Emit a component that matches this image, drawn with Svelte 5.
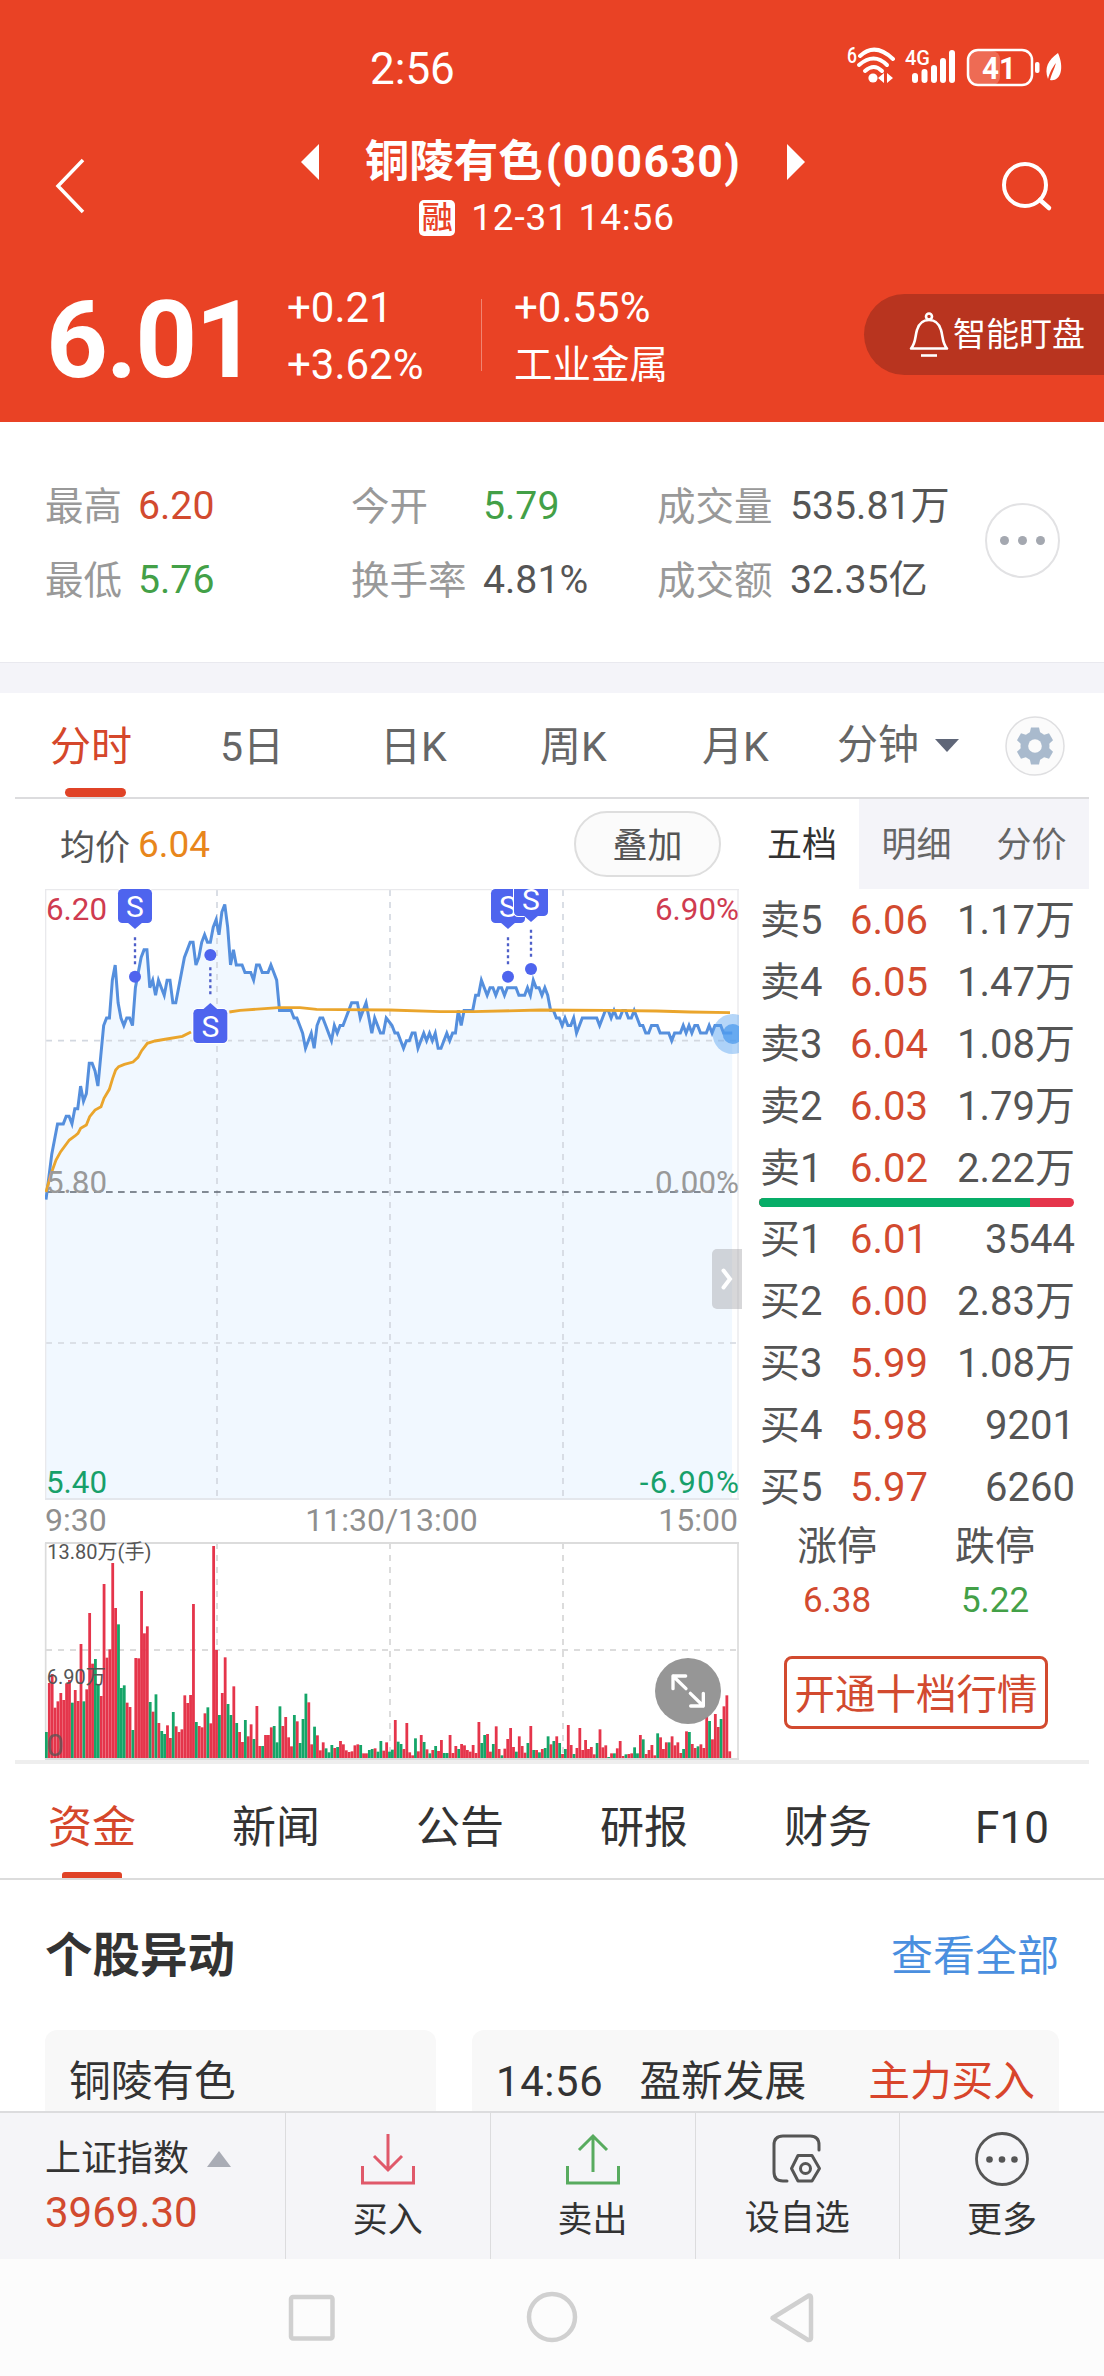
<script lang="ts">
  const stats = [
    { label: '最高', value: '6.20', tone: 'up' },
    { label: '今开', value: '5.79', tone: 'down' },
    { label: '成交量', value: '535.81万', tone: '' },
    { label: '最低', value: '5.76', tone: 'down' },
    { label: '换手率', value: '4.81%', tone: '' },
    { label: '成交额', value: '32.35亿', tone: '' }
  ];

  const periods = ['分时', '5日', '日K', '周K', '月K'];
  const infoTabs = ['资金', '新闻', '公告', '研报', '财务', 'F10'];

  const asks = [
    ['卖5', '6.06', '1.17万'],
    ['卖4', '6.05', '1.47万'],
    ['卖3', '6.04', '1.08万'],
    ['卖2', '6.03', '1.79万'],
    ['卖1', '6.02', '2.22万']
  ];
  const bids = [
    ['买1', '6.01', '3544'],
    ['买2', '6.00', '2.83万'],
    ['买3', '5.99', '1.08万'],
    ['买4', '5.98', '9201'],
    ['买5', '5.97', '6260']
  ];
  const askShare = 86;

  // Price per minute, in cents above the previous close (5.80)
  const cents = [
    -1, 2, 5, 7, 9, 9, 9, 10, 10, 9, 11, 11, 14, 12, 13, 17, 17, 16, 14, 18,
    22, 23, 23, 28, 30, 25, 23, 22, 23, 23, 22, 27, 29, 31, 32, 32, 27, 28, 26, 28,
    27, 26, 28, 28, 25, 25, 27, 29, 31, 32, 33, 33, 30, 31, 33, 34, 33, 33, 35, 36,
    34, 37, 38, 35, 30, 32, 30, 30, 30, 29, 29, 29, 28, 30, 30, 29, 29, 29, 30, 29,
    28, 24, 24, 24, 24, 24, 23, 23, 22, 21, 19, 20, 21, 19, 22, 23, 23, 22, 21, 20,
    22, 21, 22, 22, 23, 24, 25, 25, 25, 23, 24, 25, 23, 21, 23, 22, 21, 21, 23, 22.5,
    22, 21, 21, 20, 19, 20, 20, 21, 21, 19, 20, 21, 20, 21, 20, 21, 19, 19, 20, 21,
    20, 21, 21, 24, 22, 24, 24, 24, 24, 26, 26, 28, 27, 26, 27, 27, 26, 27, 27, 26,
    27, 27, 27, 27, 26, 26, 26, 27, 26, 28, 27, 27, 26, 27, 26, 24, 24, 23, 23, 22,
    23, 22, 22, 23, 21, 22, 23, 23, 23, 23, 23, 23, 22, 23, 24, 24, 23, 24, 23, 23,
    24, 24, 23, 23, 24, 23, 22, 22, 21, 21, 22, 22, 22, 21, 21, 21, 21, 20, 21, 21,
    21, 22, 21, 22, 21, 22, 22, 21, 21, 21, 22, 21, 22, 22, 22, 21, 21, 21, 21
  ];

  // Volume per minute, negative when the minute closed lower
  const volumes = [
    -78, 225, 252, 151, 170, 195, 174, 224, 234, -166, 204, 171, 342, -170, 206, 435, 283, -297, -219, 186,
    522, 301, 326, 585, 450, -401, -210, -218, 166, 153, -84, 300, 299, 501, 374, 395, -168, 139, -191, 105,
    -81, -72, 98, 60, -138, 95, 78, 86, 188, 165, 189, 462, -108, 96, 92, 134, -152, 104, 636, 324,
    -129, 195, 302, -162, -129, 215, -105, 78, 48, -114, 65, 101, -57, 156, 36, -36, 69, 69, 92, -96,
    -47, -155, 96, 123, 62, 35, -129, 110, -45, -117, -193, 167, 41, -94, 68, 23, 47, -29, -17, -39,
    30, -33, 51, 41, 23, 18, 20, 38, 41, -39, 14, 14, -24, -27, 29, -19, -51, 22, 47, -19,
    -25, 114, -49, -42, 27, 105, 17, 8, -59, 20, 69, -48, 26, -14, 24, -36, 21, 54, -15, -15,
    69, 15, 36, -27, 42, 38, 24, 19, 39, 15, 108, -45, -69, 72, 19, -42, 95, 27, -8, 28,
    57, 90, 33, -19, 65, 36, 16, -45, 96, -24, 24, -17, 27, -30, -65, 41, -51, 65, -45, 12,
    -27, 99, 39, -12, 30, 90, 24, 54, 27, 33, 11, -45, 86, 32, 38, -3, 14, -14, 29, 51,
    6, -11, 12, 14, -32, -14, 69, -56, 12, 24, 39, 8, -74, 62, 27, 47, -47, 65, 38, 47,
    15, -27, 80, -78, 42, 30, -35, 41, 30, 123, -111, 56, 132, 93, -117, 155, 188, 20
  ];

  // Chart units: three per pixel
  const step = 8.65;
  const pricePoints = cents
    .map((c, i) => `${(3 + i * step).toFixed(1)},${(909 - c * 22.7).toFixed(1)}`)
    .join(' ');
  const avgPoints =
    '3,909 18,855 33,813 47,788 73,753 90,741 99,733 107,718 124,708 134,683 150,663 168,653 177,628 193,601 203,568 212,543 221,533 238,526 264,519 279,505 290,485 307,463 330,456 365,450 412,442 438,429';
  const avgPointsAfter =
    '553,369 585,364 700,356 765,356 815,361 885,362 1035,363 1185,368 1285,368 1485,363 1685,364 1835,366 1935,369 2055,371';
  const gridX = [516, 1035, 1554];

  // y is the centre of the badge, tip points towards the trade dot
  const trades = [
    { x: 270, dot: 263, y: 51 },
    { x: 496, dot: 198, y: 411 },
    { x: 1389, dot: 263, y: 51 },
    { x: 1458, dot: 240, y: 30 }
  ];

  const teeth = [0, 60, 120, 180, 240, 300];
</script>

<div class="screen">
  <header>
    <div class="status">
      <span class="clock">2:56</span>
      <svg class="status-icons" width="220" height="44" viewBox="0 0 220 44">
        <text x="0" y="20" font-size="22" font-weight="500" textLength="10" lengthAdjust="spacingAndGlyphs">6</text>
        <g fill="none" stroke="#fff" stroke-width="4" stroke-linecap="round">
          <path d="M13 13Q28 -1 46 16" />
          <path d="M12 22Q27 9 40 22" />
          <path d="M18 28Q27 20 35 28" />
        </g>
        <circle cx="26" cy="35" r="4.6" />
        <path d="M37 30v10l-6-5zM40 30v10l6-5z" />
        <text x="58" y="22" font-size="21" font-weight="500" textLength="25" lengthAdjust="spacingAndGlyphs">4G</text>
        <g stroke="#fff" stroke-width="6" stroke-linecap="round">
          <path d="M68 37v-4M77.500 37v-8M87 37v-12M96 37v-19M105 37v-27" />
        </g>
        <rect x="122" y="8" width="31" height="34" rx="8" opacity=".22" />
        <rect x="121" y="7" width="64" height="35" rx="10" fill="none" stroke="#fff" stroke-width="2.500" />
        <text x="135" y="35.500" font-size="32" font-weight="700" textLength="34" lengthAdjust="spacingAndGlyphs">41</text>
        <rect x="188" y="19" width="4.500" height="11" rx="2" />
        <path d="M211 10C201 17 197 25 201 36C203 29 205 25 209 20C207 27 204 32 203 37C213 39 218 26 211 10Z" />
      </svg>
    </div>

    <div class="nav">
      <svg width="32" height="58" viewBox="0 0 32 58" class="back">
        <path d="M29 3L4 29L29 55" fill="none" stroke="#fff" stroke-width="3.500" />
      </svg>
      <div class="name">
        <div class="title">
          <svg width="18" height="38" viewBox="0 0 18 38"><path d="M18 1V37L0 19Z" /></svg>
          <h1>铜陵有色<span>(000630)</span></h1>
          <svg width="18" height="38" viewBox="0 0 18 38"><path d="M0 1V37L18 19Z" /></svg>
        </div>
        <div class="time"><b>融</b>12-31 14:56</div>
      </div>
      <svg width="54" height="54" viewBox="0 0 54 54" class="search">
        <circle cx="25" cy="25" r="21" fill="none" stroke="#fff" stroke-width="4" />
        <path d="M40 40L49 48" stroke="#fff" stroke-width="4.500" stroke-linecap="round" />
      </svg>
    </div>

    <div class="quote">
      <strong>6.01</strong>
      <div class="pair change"><span>+0.21</span><span>+3.62%</span></div>
      <div class="pair sector"><span>+0.55%</span><span>工业金属</span></div>
      <div class="watch">
        <svg width="40" height="46" viewBox="0 0 40 46">
          <g fill="none" stroke="#fff" stroke-width="2.600">
            <circle cx="20" cy="4.500" r="3" />
            <path d="M2 36.500C7 31 6 24 8 18C10 11 14 8 20 8C26 8 30 11 32 18C34 24 33 31 38 36.500Z" stroke-linejoin="round" />
            <path d="M12 43.500H28" />
          </g>
        </svg>
        智能盯盘
      </div>
    </div>
  </header>

  <section class="stats">
    <div class="stat-grid">
      {#each stats as s}
        <span class="label">{s.label}</span>
        <span class="value {s.tone}">{s.value}</span>
      {/each}
    </div>
    <div class="more"><i></i><i></i><i></i></div>
  </section>

  <div class="band"></div>

  <nav class="periods">
    {#each periods as p, i}
      <span class:active={i === 0}>{p}</span>
    {/each}
    <span class="minutes">
      分钟
      <svg width="24" height="13" viewBox="0 0 24 13"><path d="M0 0H24L12 13Z" fill="#5f6678" /></svg>
    </span>
    <svg class="gear" width="60" height="60" viewBox="-30 -30 60 60">
      <circle r="29" fill="#fbfbfb" stroke="#dfdfe1" stroke-width="1.500" />
      <g fill="#a9bacd">
        <circle r="14.500" />
        {#each teeth as t}
          <path d="M-5.500 -12L-4 -18.500H4L5.500 -12Z" transform="rotate({t})" />
        {/each}
      </g>
      <circle r="6.800" fill="#fbfbfb" />
    </svg>
  </nav>

  <main>
    <div class="charts">
      <div class="chart-head">
        <span>均价</span><em>6.04</em>
        <button>叠加</button>
      </div>

      <div class="chart">
        <svg width="694" height="611" viewBox="0 0 2082 1833">
          <polygon points="3,1830 {pricePoints} 2061,1830" fill="#f1f8ff" />
          <g stroke="#d3d8e0" stroke-width="5" stroke-dasharray="18 18">
            {#each gridX as x}
              <path d="M{x} 3V1830" />
            {/each}
            <path d="M3 455H2073M3 1362H2073" />
          </g>
          <path d="M3 909H2064" stroke="#5e6672" stroke-width="5" stroke-dasharray="20 16" />
          <path d="M0 1.500H2082M2 0V1833M2079 0V1833" stroke="#e9e9ec" stroke-width="4" fill="none" />
          <path d="M0 1830H2082" stroke="#e4e7ec" stroke-width="6" />
          <polyline points={pricePoints} fill="none" stroke="#558fdd" stroke-width="9" />
          <polyline points={avgPoints} fill="none" stroke="#eaa52c" stroke-width="8.500" />
          <polyline points={avgPointsAfter} fill="none" stroke="#eaa52c" stroke-width="8.500" />

          <g class="axis">
            <text x="3" y="93" fill="#cf3b50">6.20</text>
            <text x="2082" y="93" fill="#cf3b50" text-anchor="end">6.90%</text>
            <text x="3" y="911" fill="#999">5.80</text>
            <text x="2082" y="911" fill="#999" text-anchor="end">0.00%</text>
            <text x="3" y="1812" fill="#17a06a">5.40</text>
            <text x="2082" y="1812" fill="#17a06a" text-anchor="end" textLength="298">-6.90%</text>
          </g>

          {#each trades as t}
            {@const dir = t.y < t.dot ? 1 : -1}
            <g fill="#4e64ee">
              <path
                d="M{t.x} {t.dot - dir * 118}V{t.dot - dir * 36}"
                stroke="#4e5fc9"
                stroke-width="7"
                stroke-dasharray="9 9"
              />
              <circle cx={t.x} cy={t.dot} r="18" />
              <rect x={t.x - 51} y={t.y - 51} width="102" height="102" rx="13" class="badge" />
              <path d="M{t.x - 24} {t.y + dir * 48}H{t.x + 24}L{t.x} {t.y + dir * 69}Z" />
              <text x={t.x} y={t.y + 32} class="badge-text">S</text>
            </g>
          {/each}

          <circle cx="2063" cy="435" r="60" fill="#5ba3f0" opacity=".45" />
          <circle cx="2063" cy="435" r="30" fill="#4d9bee" opacity=".75" />
        </svg>
        <div class="fold">
          <svg width="12" height="22" viewBox="0 0 12 22">
            <path d="M2.500 2.500L9 11L2.500 19.500" fill="none" stroke="#fff" stroke-width="4" stroke-linecap="round" />
          </svg>
        </div>
      </div>

      <div class="hours"><span>9:30</span><span>11:30/13:00</span><span>15:00</span></div>

      <svg class="volume" width="694" height="218" viewBox="0 0 2082 654">
        <g stroke="#dcdcdc" stroke-width="6" stroke-dasharray="18 18">
          {#each gridX as x}
            <path d="M{x} 3V648" />
          {/each}
          <path d="M3 324H2073" />
        </g>
        <path d="M0 3H2082M0 651H2082" stroke="#dcdcdc" stroke-width="6" />
        <path d="M2 3V651M2079 3V651" stroke="#dcdcdc" stroke-width="5" />
        {#each volumes as v, i}
          <rect
            x={i * step}
            y={648 - Math.abs(v)}
            width="8.4"
            height={Math.abs(v)}
            fill={v < 0 ? '#15a568' : '#e5354b'}
          />
        {/each}
        <g fill="#555" font-size="60">
          <text x="7" y="52">13.80万(手)</text>
          <text x="5" y="427">6.90万</text>
          <text x="4" y="642" font-size="94" opacity=".75">0</text>
        </g>
        <circle cx="1929" cy="447" r="99" fill="#8e8e8e" opacity=".93" />
        <g fill="none" stroke="#fff" stroke-width="10" stroke-linecap="round" stroke-linejoin="round">
          <path d="M1923 440L1884 402M1884 440V402H1922" />
          <path d="M1936 454L1975 492M1975 454V492H1937" />
        </g>
      </svg>
    </div>

    <aside>
      <div class="book-tabs"><span class="on">五档</span><span>明细</span><span>分价</span></div>
      <div class="book">
        {#each asks as [name, price, amount]}
          <div class="row"><span>{name}</span><span class="up">{price}</span><span>{amount}</span></div>
        {/each}
        <div class="ratio"><i style="width: {askShare}%"></i></div>
        {#each bids as [name, price, amount]}
          <div class="row"><span>{name}</span><span class="up">{price}</span><span>{amount}</span></div>
        {/each}
      </div>
      <div class="limits">
        <div>涨停<span class="up">6.38</span></div>
        <div>跌停<span class="down">5.22</span></div>
      </div>
      <button class="level2">开通十档行情</button>
    </aside>
  </main>

  <nav class="info-tabs">
    {#each infoTabs as t, i}
      <span class:active={i === 0}>{t}</span>
    {/each}
  </nav>

  <section class="moves">
    <div class="moves-head">
      <h2>个股异动</h2>
      <a href="#all">查看全部</a>
    </div>
    <div class="cards">
      <div class="card own">铜陵有色</div>
      <div class="card"><span class="at">14:56</span><span>盈新发展</span><span class="hot">主力买入</span></div>
    </div>
  </section>

  <footer>
    <div class="index">
      <span>上证指数 <svg width="24" height="16" viewBox="0 0 24 16"><path d="M12 0L24 16H0Z" fill="#a9acb5" /></svg></span>
      <strong>3969.30</strong>
    </div>
    <div class="action">
      <svg width="56" height="56" viewBox="0 0 56 56" fill="none" stroke="#e0596a" stroke-width="3">
        <path d="M28 3V39M14 25L28 39L42 25" />
        <path d="M2.500 35V52H53.500V35" />
      </svg>
      买入
    </div>
    <div class="action">
      <svg width="56" height="56" viewBox="0 0 56 56" fill="none" stroke="#58ab5f" stroke-width="3">
        <path d="M28 41V5M14 19L28 5L42 19" />
        <path d="M2.500 35V52H53.500V35" />
      </svg>
      卖出
    </div>
    <div class="action pick">
      <svg width="56" height="56" viewBox="0 0 56 56" fill="none" stroke="#555" stroke-width="3" stroke-linecap="round" stroke-linejoin="round">
        <path d="M18 50H14Q5 50 5 41V14Q5 5 14 5H41Q50 5 50 14V19" />
        <path d="M29 24.500H43L50.500 37.500L43 50H29L22.500 37.500Z" />
        <circle cx="36.500" cy="37.500" r="5" />
      </svg>
      设自选
    </div>
    <div class="action">
      <svg width="56" height="56" viewBox="0 0 56 56">
        <circle cx="28" cy="28" r="25.500" fill="none" stroke="#555" stroke-width="2.800" />
        <g fill="#555"><circle cx="15.500" cy="28.500" r="3.300" /><circle cx="28" cy="28.500" r="3.300" /><circle cx="40.500" cy="28.500" r="3.300" /></g>
      </svg>
      更多
    </div>
  </footer>

  <div class="system-nav">
    <svg width="1104" height="117" viewBox="0 0 1104 117" fill="none" stroke="#d0d0d0" stroke-width="4.500" stroke-linejoin="round">
      <rect x="291" y="38" width="41.500" height="41.500" rx="2" />
      <circle cx="552" cy="58" r="23" />
      <path d="M772.500 59L809 36.500Q811 36.500 811 39V79Q811 81.500 808 81Z" />
    </svg>
  </div>
</div>

<style>
  :global(body) {
    background: #fff;
  }

  .screen {
    width: 1104px;
    height: 2376px;
    overflow: hidden;
    display: flex;
    flex-direction: column;
    color: #555;
    font-family: Roboto, 'Noto Sans CJK SC', sans-serif;
  }

  .screen * {
    box-sizing: border-box;
    font-family: inherit;
  }

  .screen > * {
    flex: none;
  }

  svg {
    display: block;
    flex: none;
  }

  h1,
  h2 {
    margin: 0;
  }

  .up {
    color: #d24a2f;
  }

  .down {
    color: #43a047;
  }

  /* Header */
  header {
    height: 422px;
    background: #e94225;
    color: #fff;
  }

  header svg {
    fill: #fff;
  }

  .status {
    display: flex;
    justify-content: space-between;
    height: 136px;
    padding: 43px 37px 0 370px;
  }

  .clock {
    font-size: 44px;
    line-height: 52px;
  }

  .nav {
    display: flex;
    justify-content: space-between;
    height: 136px;
    padding: 0 50px 0 54px;
  }

  .back {
    margin-top: 21px;
  }

  .search {
    margin-top: 24px;
  }

  .name {
    display: flex;
    flex-direction: column;
    align-items: center;
    margin-left: 20px;
  }

  .title {
    display: flex;
    align-items: center;
    gap: 46px;
    height: 52px;
  }

  h1 {
    font-size: 44.5px;
    line-height: 54px;
  }

  h1 span {
    margin-left: 3px;
    letter-spacing: 1.4px;
  }

  .time {
    display: flex;
    align-items: center;
    gap: 16px;
    height: 40px;
    margin: 10px 0 0 -12px;
    font-size: 37px;
    line-height: 44px;
    letter-spacing: 0.8px;
  }

  .time b {
    width: 36px;
    height: 36px;
    border-radius: 5px;
    background: #fff;
    color: #e94225;
    font-size: 31px;
    font-weight: 500;
    line-height: 36px;
    text-align: center;
    letter-spacing: 0;
  }

  .quote {
    display: flex;
    height: 150px;
    padding: 8px 0 0 46px;
  }

  .quote strong {
    width: 241px;
    padding-top: 15px;
    font-size: 108px;
    line-height: 90px;
    letter-spacing: -2px;
  }

  .pair {
    display: flex;
    flex-direction: column;
    font-size: 42px;
    line-height: 56.5px;
  }

  .change {
    position: relative;
    width: 195px;
  }

  .change::after {
    content: '';
    position: absolute;
    top: 19px;
    left: 194px;
    width: 1px;
    height: 72px;
    background: rgba(255, 255, 255, 0.35);
  }

  .sector {
    padding-left: 32px;
  }

  .sector span:last-child {
    font-size: 38.5px;
  }

  .watch {
    display: flex;
    align-items: center;
    gap: 4px;
    width: 240px;
    height: 81px;
    margin: 14px 0 0 auto;
    padding-left: 45px;
    border-radius: 41px 0 0 41px;
    background: #b8341f;
    font-size: 33px;
    line-height: 78px;
    white-space: nowrap;
  }

  /* Day summary */
  .stats {
    display: flex;
    height: 240px;
    padding: 47px 44px 0 45px;
  }

  .stat-grid {
    display: grid;
    grid-template-columns: 93px 213px 132px 174px 133px 190px;
    grid-auto-rows: 74px;
    line-height: 75px;
    white-space: nowrap;
  }

  .label {
    color: #999;
    font-size: 38.5px;
  }

  .value {
    font-size: 39.2px;
  }

  .more {
    display: flex;
    align-items: center;
    justify-content: center;
    gap: 9px;
    width: 75px;
    height: 75px;
    margin: 34px 0 0 5px;
    border: 2px solid #e2e2e4;
    border-radius: 50%;
  }

  .more i {
    width: 9px;
    height: 9px;
    border-radius: 50%;
    background: #a4a8b0;
  }

  .band {
    height: 31px;
    border-top: 1px solid #e9e9ef;
    background: #f4f4f9;
  }

  /* Period tabs */
  .periods {
    display: grid;
    grid-template-columns: 170px 160px 160px 162px 135px 168px 60px;
    grid-template-rows: 104px;
    height: 106px;
    margin: 0 15px;
    padding-left: 35px;
    border-bottom: 2px solid #dcdcde;
    color: #666;
    font-size: 41px;
    line-height: 108px;
    white-space: nowrap;
  }

  .active {
    position: relative;
    color: #d5472b;
  }

  .active::after {
    content: '';
    position: absolute;
    bottom: 0;
    left: 15px;
    width: 61px;
    height: 9px;
    border-radius: 5px;
    background: #e04327;
  }

  .minutes {
    display: flex;
    align-items: center;
    gap: 16px;
  }

  .gear {
    margin-top: 23px;
  }

  /* Charts and order book */
  main {
    display: flex;
    height: 965px;
    margin: 0 15px;
    border-bottom: 4px solid #eee;
  }

  .charts {
    width: 744px;
    padding-left: 30px;
  }

  .chart-head {
    display: flex;
    align-items: center;
    height: 90px;
    padding-left: 15px;
    font-size: 35px;
  }

  .chart-head em {
    margin-left: 8px;
    color: #e8861b;
    font-size: 37px;
    font-style: normal;
  }

  .chart-head button {
    width: 147px;
    height: 66px;
    margin: 0 38px 0 auto;
    padding: 0 0 3px;
    border: 2px solid #dedede;
    border-radius: 33px;
    background: #fbfbfb;
    color: #555;
    font-size: 35px;
  }

  .chart {
    position: relative;
  }

  .axis {
    font-size: 94px;
  }

  .badge {
    stroke: #fff;
    stroke-width: 6px;
    paint-order: stroke;
  }

  .badge-text {
    fill: #fff;
    font-size: 90px;
    text-anchor: middle;
  }

  .fold {
    position: absolute;
    top: 360px;
    left: 667px;
    display: flex;
    align-items: center;
    justify-content: center;
    width: 30px;
    height: 60px;
    border-radius: 5px 0 0 5px;
    background: rgba(160, 160, 165, 0.42);
  }

  .hours {
    display: grid;
    grid-template-columns: 1fr 180px 1fr;
    width: 693px;
    height: 42px;
    color: #8f8f8f;
    font-size: 32px;
    line-height: 41px;
    text-align: center;
  }

  .hours span:first-child {
    text-align: left;
  }

  .hours span:last-child {
    text-align: right;
  }

  .volume {
    overflow: visible;
  }

  aside {
    width: 330px;
  }

  .book-tabs {
    display: grid;
    grid-template-columns: 100px 115px 115px;
    grid-template-rows: 90px;
    height: 90px;
    color: #666;
    font-size: 35px;
    line-height: 93px;
    text-align: center;
  }

  .book-tabs span:not(.on) {
    background: #f4f4f9;
  }

  .book-tabs .on {
    padding-right: 22px;
    color: #333;
    text-align: right;
  }

  .row {
    display: grid;
    grid-template-columns: 90px 90px 1fr;
    height: 62px;
    padding: 0 14px 0 1px;
    font-size: 40px;
    line-height: 64px;
    white-space: nowrap;
  }

  .row span:last-child {
    text-align: right;
  }

  .ratio {
    width: 315px;
    height: 9px;
    margin: -1px 0 1px;
    overflow: hidden;
    border-radius: 5px;
    background: #e5354b;
  }

  .ratio i {
    display: block;
    height: 100%;
    background: #07ad68;
  }

  .limits {
    display: flex;
    justify-content: center;
    gap: 78px;
    padding: 2px 16px 0 0;
    font-size: 40px;
    line-height: 54px;
  }

  .limits span {
    display: block;
    font-size: 35px;
    text-align: center;
  }

  .level2 {
    display: block;
    width: 264px;
    height: 73px;
    margin: 28px 0 0 25px;
    padding: 0 0 2px;
    border: 3px solid #d24a2f;
    border-radius: 8px;
    background: #fff;
    color: #d24a2f;
    font-size: 40.5px;
    white-space: nowrap;
  }

  /* Information tabs */
  .info-tabs {
    display: grid;
    grid-template-columns: repeat(6, 184px);
    grid-template-rows: 114px;
    height: 116px;
    border-bottom: 2px solid #dcdcdc;
    color: #333;
    font-size: 44px;
    line-height: 128px;
    text-align: center;
  }

  .info-tabs .active::after {
    left: 62px;
    width: 60px;
    height: 6px;
    border-radius: 3px 3px 0 0;
  }

  .moves {
    height: 231px;
    overflow: hidden;
    padding: 44px 45px 0;
  }

  .moves-head {
    display: flex;
    justify-content: space-between;
    height: 106px;
    line-height: 65px;
  }

  h2 {
    color: #333;
    font-size: 47.5px;
  }

  .moves-head a {
    color: #4a8fdf;
    font-size: 42px;
    text-decoration: none;
  }

  .cards {
    display: grid;
    grid-template-columns: 391px 587px;
    gap: 36px;
  }

  .card {
    display: flex;
    justify-content: space-between;
    height: 130px;
    padding: 0 24px;
    border-radius: 12px;
    background: #f8f8f8;
    color: #333;
    font-size: 41.7px;
    line-height: 103px;
  }

  .at {
    letter-spacing: 0.7px;
  }

  .hot {
    margin-left: 26px;
    color: #d8452b;
  }

  /* Bottom bar */
  footer {
    display: grid;
    grid-template-columns: 285px repeat(4, 1fr);
    height: 148px;
    border-top: 2px solid #dcdcde;
    background: #f5f5f8;
    color: #333;
    font-size: 35px;
  }

  .index {
    padding: 19px 0 0 45px;
    line-height: 54px;
  }

  .index span {
    display: flex;
    align-items: center;
    gap: 18px;
    font-size: 36px;
  }

  .index strong {
    color: #d24a2f;
    font-size: 42px;
    font-weight: 400;
  }

  .action {
    display: flex;
    flex-direction: column;
    align-items: center;
    padding-top: 18px;
    border-left: 1px solid #dcdcde;
    line-height: 68px;
  }

  .pick {
    line-height: 63px;
  }

  .system-nav {
    height: 117px;
    background: #fcfcfc;
  }
</style>
